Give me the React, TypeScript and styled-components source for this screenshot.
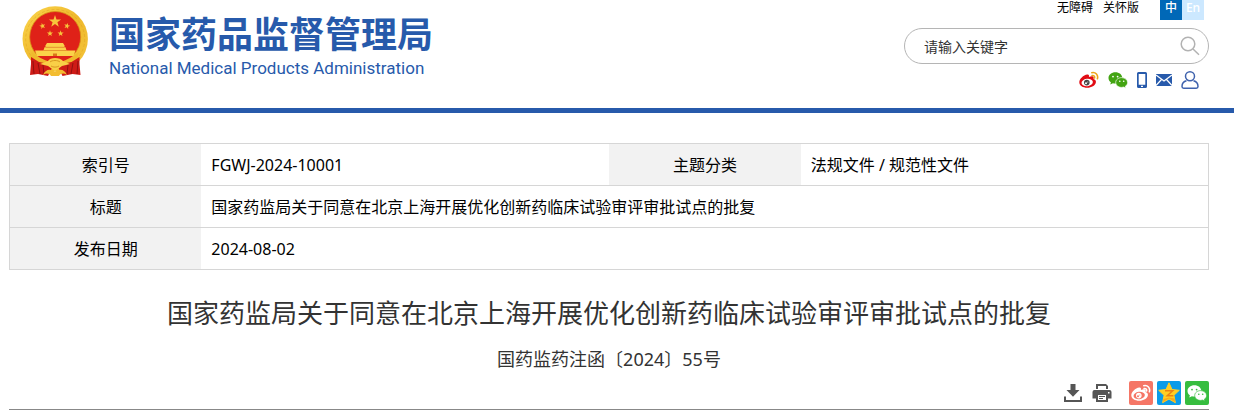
import React from "react";
import styled, { createGlobalStyle } from "styled-components";

const GlobalStyle = createGlobalStyle`
  *, *::before, *::after { box-sizing: border-box; }
  body {
    margin: 0;
    background: #fff;
    color: #000;
    font-family: "Noto Sans", "Noto Sans CJK SC", sans-serif;
    font-size: 16px;
  }
`;

const Header = styled.header`
  display: flex;
  justify-content: space-between;
  align-items: flex-start;
  padding: 0 25px 19px 22px;
  border-bottom: 5px solid #275aab;
`;

const Brand = styled.a`
  display: flex;
  gap: 20px;
  padding-top: 6px;
  color: #275aab;
  text-decoration: none;
`;

const BrandText = styled.span`
  display: flex;
  flex-direction: column;
  gap: 4px;
  padding-top: 4px;
`;

const BrandName = styled.span`
  font-family: "Noto Sans CJK SC", sans-serif;
  font-size: 36px;
  line-height: 44px;
  font-weight: 700;
  white-space: nowrap;
`;

const BrandEnglish = styled.span`
  font-family: Roboto, "Liberation Sans", sans-serif;
  font-size: 17px;
  line-height: 20px;
  white-space: nowrap;
`;

const Tools = styled.div`
  display: flex;
  flex-direction: column;
  align-items: flex-end;
  width: 305px;
`;

const TopLinks = styled.nav`
  display: flex;
  height: 20px;
  padding-right: 5px;
  font-size: 12px;
  line-height: 16px;
`;

const TopLink = styled.a`
  margin-right: 10px;
  color: #000;
  text-decoration: none;
`;

const Languages = styled.div`
  display: flex;
  margin-left: 11px;
`;

const Language = styled.a<{ $active?: boolean }>`
  width: 22px;
  height: 20px;
  background: ${(p) => (p.$active ? "#0068b7" : "#cce8ff")};
  color: #fff;
  font-weight: 500;
  text-align: center;
  text-decoration: none;
`;

const Search = styled.form`
  display: flex;
  align-items: center;
  width: 100%;
  height: 36px;
  margin: 8px 0 7px;
  padding: 0 8px 0 19px;
  border: 1px solid #b5b5b5;
  border-radius: 18px;
`;

const SearchInput = styled.input`
  flex: 1;
  min-width: 0;
  padding: 0;
  border: 0;
  outline: 0;
  background: none;
  font: inherit;
  font-size: 14px;
  &::placeholder { color: #333; opacity: 1; }
`;

const IconButton = styled.button`
  display: flex;
  padding: 0;
  border: 0;
  background: none;
  cursor: pointer;
`;

const QuickLinks = styled.nav`
  display: flex;
  align-items: center;
  height: 18px;
  gap: 9px;
  padding-right: 10px;
`;

const IconLink = styled.a`
  display: flex;
`;

const Main = styled.main`
  padding: 30px 25px 0 9px;
`;

const InfoTable = styled.table`
  width: 100%;
  table-layout: fixed;
  border-collapse: collapse;
  border: 1px solid #d6d6d6;
`;

const InfoRow = styled.tr`
  height: 42px;
  border-bottom: 1px solid #d6d6d6;
`;

const Column = styled.col<{ $share: number }>`
  width: ${(p) => p.$share}%;
`;

const Label = styled.th`
  padding: 0;
  background: #f2f2f2;
  font-weight: 400;
  line-height: 24px;
`;

const Value = styled.td`
  padding: 0 10px;
  line-height: 24px;
`;

const Title = styled.h1`
  margin: 24px 0 0;
  color: #333;
  font-size: 26px;
  line-height: 38px;
  font-weight: 400;
  text-align: center;
`;

const DocumentNumber = styled.p`
  margin: 14px 0 0;
  color: #333;
  font-size: 18px;
  line-height: 26px;
  text-align: center;
`;

const Actions = styled.div`
  display: flex;
  justify-content: flex-end;
  align-items: center;
  gap: 9px;
  padding: 9px 0 4px;
  border-bottom: 1px solid #888;
`;

const ShareGroup = styled.div`
  display: flex;
  gap: 4px;
  margin-left: 8px;
`;

const ShareButton = styled.button<{ $color: string }>`
  display: flex;
  align-items: center;
  justify-content: center;
  width: 24px;
  height: 24px;
  padding: 0;
  border: 0;
  border-radius: 2px;
  background: ${(p) => p.$color};
  cursor: pointer;
`;

const star = (cx: number, cy: number, r: number, turn = 0) =>
  Array.from({ length: 10 }, (_, i) => {
    const a = ((i * 36 - 90 + turn) * Math.PI) / 180;
    const d = i % 2 ? r * 0.4 : r;
    return `${(cx + d * Math.cos(a)).toFixed(2)},${(cy + d * Math.sin(a)).toFixed(2)}`;
  }).join(" ");

const Emblem = () => (
  <svg width="67" height="71" viewBox="0 0 67 71" role="img" aria-label="国徽">
    <defs>
      <linearGradient id="gold" x1="0" y1="0" x2="1" y2="1">
        <stop offset="0" stopColor="#fbd64e" />
        <stop offset="0.5" stopColor="#efb92c" />
        <stop offset="1" stopColor="#f4c43a" />
      </linearGradient>
    </defs>
    <circle cx="33.2" cy="33" r="32.7" fill="url(#gold)" />
    <circle cx="33.2" cy="33" r="29.5" fill="none" stroke="#d99c1c" strokeWidth="1" strokeDasharray="3 2" opacity="0.4" />
    <circle cx="33.2" cy="31" r="25.5" fill="#df2118" stroke="#d89316" strokeWidth="0.8" />
    <g fill="#f7c53b">
      <polygon points={star(33, 15.5, 6.4)} />
      <polygon points={star(20.5, 20, 3.2, -15)} />
      <polygon points={star(45, 20, 3.2, 15)} />
      <polygon points={star(28, 27.5, 3.2)} />
      <polygon points={star(38.6, 27.5, 3.2)} />
    </g>
    <g fill="#fbd24a">
      <path d="M25 37h16l1.5 2.5v1.500h-19v-1.500z" />
      <path d="M22.5 41.200h21l1 3.200h-23z" />
      <path d="M13 44.500h40.500l-2 5.500H15z" />
    </g>
    <path d="M24 41.200h18M22 44.500h22" stroke="#d98a22" strokeWidth="0.5" />
    <path d="M31 50v-2.500h4V50z" fill="#d97719" />
    <path d="M9 46C16 52 25 53 33 53s17-1 24-7L53 60 33 63 13 60z" fill="#efb92c" />
    <path d="M15.500 50h35.500c-4 3-9 4.500-11 6H27c-2-1.500-8-3-11.500-6z" fill="#df2118" />
    <path d="M9 51l8 5 10 2 3 4-4 8-10-2-8 1 1-11z" fill="#ce1b16" />
    <path d="M57.500 51l-8 5-10 2-3 4 4 8 10-2 8 1-1-11z" fill="#ce1b16" />
    <path d="M11 55l1 13M16 57l2 11M21 59l1 9M56 55l-1 13M51 57l-2 11M46 59l-1 9" stroke="#93100f" strokeWidth="1" fill="none" />
    <path d="M26 55c2-4 12-4 15 0l7 3-8 2-7 5-7-5-8-2z" fill="#f9cf47" />
    <path d="M28 56c2-2 8-2 10 0M29 60c2 1.500 6 1.500 8 0" stroke="#d99820" strokeWidth="1" fill="none" />
    <path d="M21 69c2-5 7-7 12-3 5-4 10-2 12 3-3-2-6-2-8 1h-8c-2-3-5-3-8-1z" fill="#f3bd31" />
  </svg>
);

const Magnifier = () => (
  <svg width="20" height="20" viewBox="0 0 20 20" fill="none" stroke="#b2b2b2" strokeWidth="1.5">
    <circle cx="8" cy="8" r="6.8" />
    <path d="M13 13l6 5.7" />
  </svg>
);

const Weibo = ({ size, mono }: { size: number; mono?: boolean }) => (
  <svg width={size} height={size} viewBox="0 0 20 20">
    <path
      d="M8.300 4.600c1.400-.3 2.100.7 1.600 2.400 2.300-.9 4.600-1 4.800.5.100.6 0 1-.2 1.500 1.600.4 2.700 1.600 2.400 3.300-.5 3.200-4.400 5.500-8.700 5.500-4.300 0-7.900-2.100-7.900-5.500 0-3 4-7.200 8-7.700z"
      fill={mono ? "#fff" : "#e10c14"}
    />
    <ellipse cx="8.200" cy="12.500" rx="5.700" ry="3.700" transform="rotate(-7 8.200 12.500)" fill={mono ? "#f57666" : "#fff"} />
    <circle cx="7.800" cy="12.600" r="2.800" fill={mono ? "#fff" : "#444"} />
    <circle cx="7" cy="13.300" r="1" fill={mono ? "#f57666" : "#fff"} />
    <circle cx="8.800" cy="12" r="0.500" fill={mono ? "#f57666" : "#fff"} />
    <path
      d="M12.800 2.700c3.800-.8 6.700 2.100 5.600 6M13.100 5.500c1.700-.3 2.900.9 2.400 2.500"
      fill="none"
      stroke={mono ? "#fff" : "#eda51a"}
      strokeWidth="1.600"
      strokeLinecap="round"
    />
  </svg>
);

const Wechat = ({ size, color, eye }: { size: number; color: string; eye: string }) => (
  <svg width={size} height={size} viewBox="0 0 20 20">
    <path d="M7.400 2.300C3.500 2.300.5 4.800.5 8c0 1.800.9 3.300 2.400 4.300l-.6 2.200 2.600-1.300c.8.2 1.600.4 2.500.4 3.800 0 6.900-2.500 6.900-5.700S11.200 2.300 7.400 2.300z" fill={color} />
    <path d="M13.700 7.600c-3.400 0-6 2.200-6 4.900s2.600 4.900 6 4.900c.7 0 1.400-.1 2-.3l2.100 1.100-.5-1.900c1.400-.9 2.300-2.200 2.300-3.800 0-2.700-2.600-4.900-5.900-4.900z" fill={color} stroke={eye} strokeWidth="0.700" />
    <g fill={eye}>
      <circle cx="5" cy="6.600" r="0.900" />
      <circle cx="9.600" cy="6.600" r="0.900" />
      <circle cx="11.800" cy="11.200" r="0.800" />
      <circle cx="15.700" cy="11.200" r="0.800" />
    </g>
  </svg>
);

const Phone = () => (
  <svg width="10" height="16" viewBox="0 0 10 16">
    <path fillRule="evenodd" d="M1.500 0h7A1.500 1.500 0 0 1 10 1.500v13A1.500 1.500 0 0 1 8.500 16h-7A1.500 1.500 0 0 1 0 14.500v-13A1.500 1.500 0 0 1 1.500 0zM1.700 2v10.800h6.600V2zM4 13.700v1.200h2v-1.200z" fill="#275aab" />
  </svg>
);

const Mail = () => (
  <svg width="16" height="12" viewBox="0 0 16 12">
    <rect width="16" height="12" fill="#275aab" />
    <path d="M0 1l8 6 8-6M0 11.500l5.500-6M16 11.500l-5.500-6" fill="none" stroke="#fff" strokeWidth="1.200" />
  </svg>
);

const Person = () => (
  <svg width="18" height="18" viewBox="0 0 18 18" fill="none" stroke="#3f62ad" strokeWidth="1.500">
    <circle cx="9" cy="5.300" r="4.500" />
    <path d="M5.500 9.800C2.500 10.500 1 12.800 1 15.500c0 1 .7 1.700 1.700 1.700h12.600c1 0 1.700-.7 1.700-1.700 0-2.700-1.500-5-4.500-5.700" />
  </svg>
);

const Download = () => (
  <svg width="20" height="20" viewBox="0 0 20 20" fill="#555">
    <path d="M7.500 1h5v6h4L10 13.800 3.500 7h4z" />
    <path d="M1 13.500h2V17h14v-3.500h2V19H1z" />
  </svg>
);

const Printer = () => (
  <svg width="20" height="20" viewBox="0 0 20 20" fill="#555">
    <path fillRule="evenodd" d="M4 1h10l2 2v3h-2V3H6v3H4z" />
    <path fillRule="evenodd" d="M2.500 7h15A2 2 0 0 1 19.500 9v6.500H16V19H4v-3.500H.5V9a2 2 0 0 1 2-2zM6 12v5h8v-5zM16 9v1.500h1.500V9z" />
    <path d="M7 13h6v1H7zM7 15h4v1H7z" />
  </svg>
);

const Qzone = () => (
  <svg width="24" height="24" viewBox="0 0 24 24">
    <path d="M12 1.800l3 6.700 7.300.8-5.400 5 1.500 7.400L12 18l-6.400 3.700 1.500-7.400-5.400-5L9 8.500z" fill="#ffce23" stroke="#ffce23" strokeLinejoin="round" />
    <path d="M8 9.800h7.700l-5.500 5h6.200" fill="none" stroke="#ec8113" strokeWidth="1.500" />
    <path d="M6 21l6-3.500 6 3.500-.5-3.500-5.500-1-5.500 1.500z" fill="#f9a71a" />
  </svg>
);

export default function App() {
  return (
    <>
      <GlobalStyle />
      <Header>
        <Brand href="#">
          <Emblem />
          <BrandText>
            <BrandName>国家药品监督管理局</BrandName>
            <BrandEnglish>National Medical Products Administration</BrandEnglish>
          </BrandText>
        </Brand>
        <Tools>
          <TopLinks>
            <TopLink href="#">无障碍</TopLink>
            <TopLink href="#">关怀版</TopLink>
            <Languages>
              <Language href="#" $active>中</Language>
              <Language href="#">En</Language>
            </Languages>
          </TopLinks>
          <Search role="search">
            <SearchInput type="text" placeholder="请输入关键字" aria-label="请输入关键字" />
            <IconButton type="button" aria-label="搜索"><Magnifier /></IconButton>
          </Search>
          <QuickLinks>
            <IconLink href="#" aria-label="微博"><Weibo size={20} /></IconLink>
            <IconLink href="#" aria-label="微信"><Wechat size={20} color="#43a412" eye="#fff" /></IconLink>
            <IconLink href="#" aria-label="手机版"><Phone /></IconLink>
            <IconLink href="#" aria-label="邮箱"><Mail /></IconLink>
            <IconLink href="#" aria-label="个人中心"><Person /></IconLink>
          </QuickLinks>
        </Tools>
      </Header>
      <Main>
        <InfoTable>
          <colgroup>
            <Column $share={16} />
            <Column $share={34} />
            <Column $share={16} />
            <Column $share={34} />
          </colgroup>
          <tbody>
            <InfoRow>
              <Label scope="row">索引号</Label>
              <Value>FGWJ-2024-10001</Value>
              <Label scope="row">主题分类</Label>
              <Value>法规文件 / 规范性文件</Value>
            </InfoRow>
            <InfoRow>
              <Label scope="row">标题</Label>
              <Value colSpan={3}>国家药监局关于同意在北京上海开展优化创新药临床试验审评审批试点的批复</Value>
            </InfoRow>
            <InfoRow>
              <Label scope="row">发布日期</Label>
              <Value colSpan={3}>2024-08-02</Value>
            </InfoRow>
          </tbody>
        </InfoTable>
        <Title>国家药监局关于同意在北京上海开展优化创新药临床试验审评审批试点的批复</Title>
        <DocumentNumber>国药监药注函〔2024〕55号</DocumentNumber>
        <Actions>
          <IconButton type="button" aria-label="下载"><Download /></IconButton>
          <IconButton type="button" aria-label="打印"><Printer /></IconButton>
          <ShareGroup>
            <ShareButton type="button" $color="#f57666" aria-label="分享到微博"><Weibo size={20} mono /></ShareButton>
            <ShareButton type="button" $color="#0b9be8" aria-label="分享到QQ空间"><Qzone /></ShareButton>
            <ShareButton type="button" $color="#36bd3f" aria-label="分享到微信"><Wechat size={20} color="#fff" eye="#36bd3f" /></ShareButton>
          </ShareGroup>
        </Actions>
      </Main>
    </>
  );
}
